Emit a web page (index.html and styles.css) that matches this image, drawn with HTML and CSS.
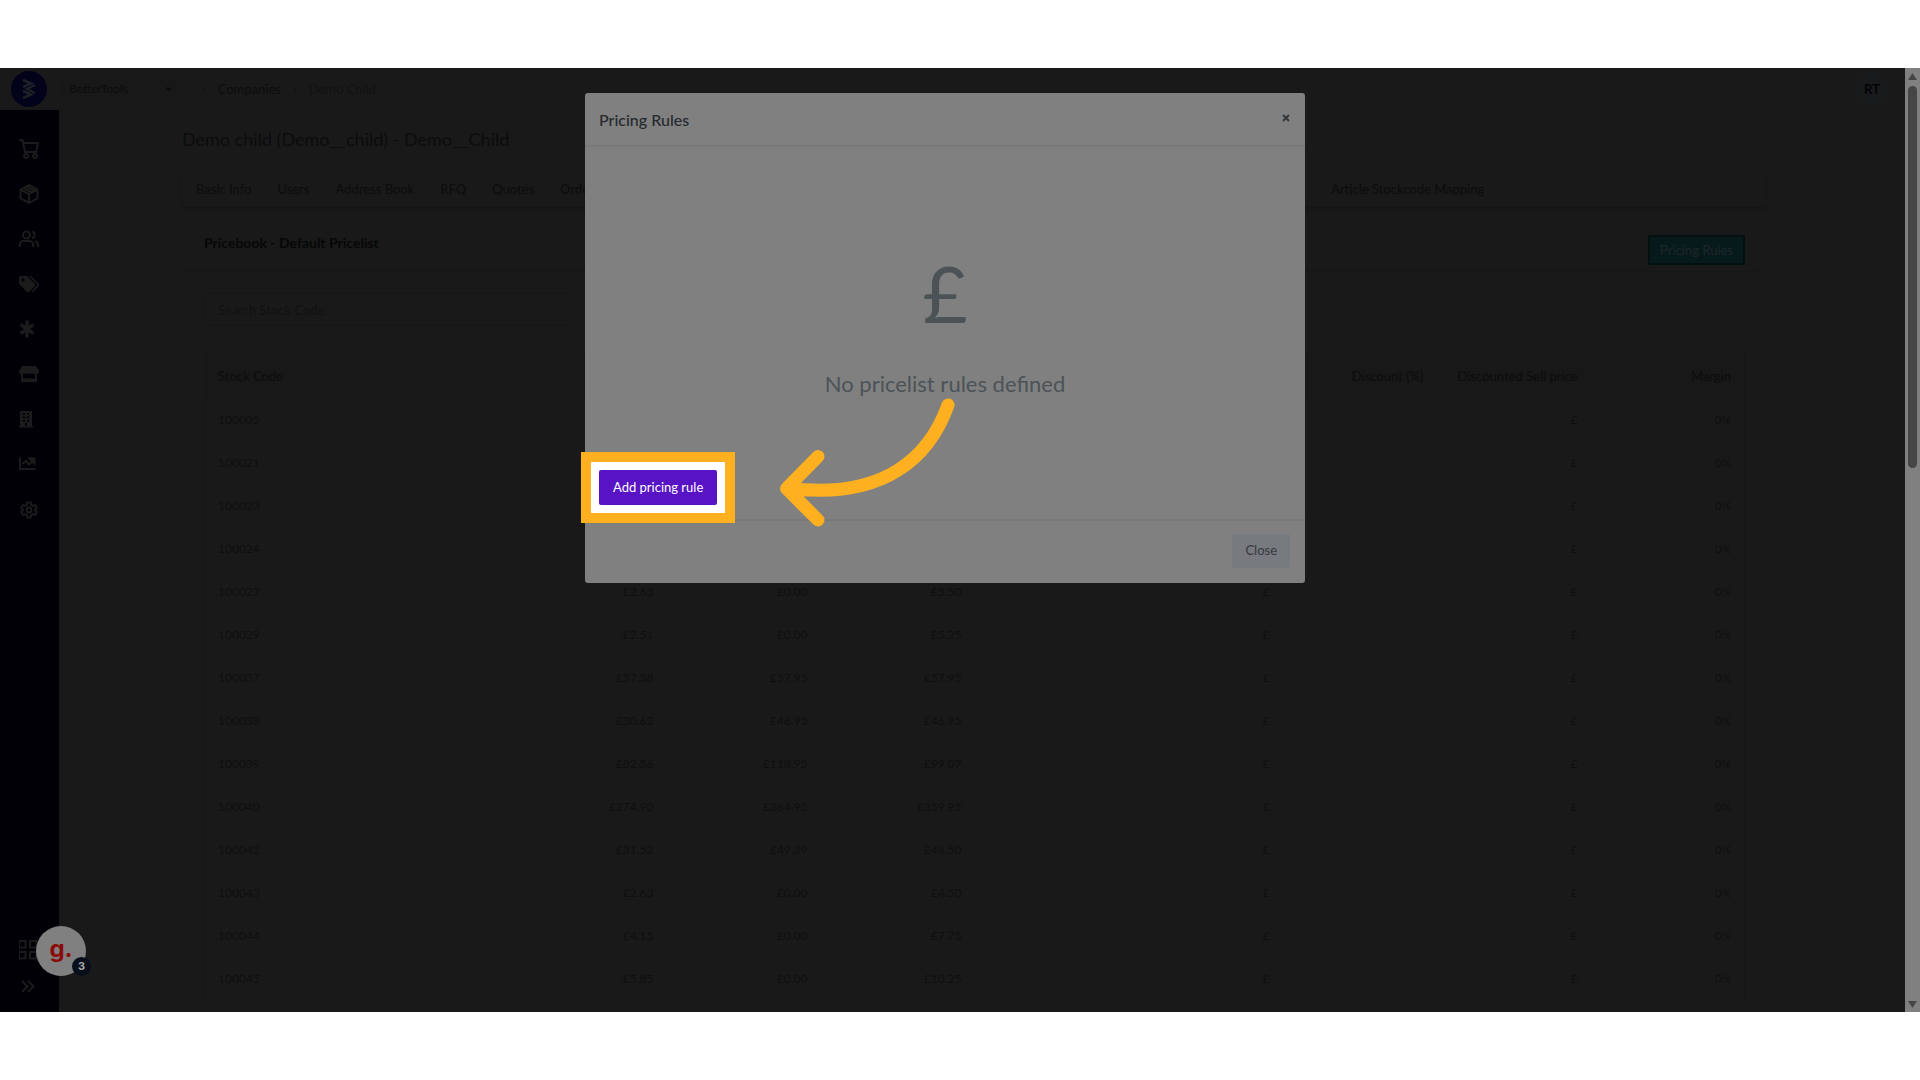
FILE: index.html
```html
<!DOCTYPE html>
<html lang="en">
<head>
  <meta charset="UTF-8">
  <meta name="viewport" content="width=device-width, initial-scale=1.0">
  <title>Pricing Rules</title>
  <link rel="stylesheet" href="styles.css">
</head>
<body>
<div class="stage">

  <header class="topbar">
    <a class="logo" href="#" aria-label="Home">
      <svg width="36" height="36" viewBox="0 0 36 36"><circle cx="18" cy="18" r="18" fill="#02031a"/><path d="M12 9l8 3.500-8 3.500M24 14l-8 4 8 4M12 20l8 3.500-8 3.500" fill="none" stroke="#1d2126" stroke-width="2.500"/></svg>
    </a>
    <select class="store-select" aria-label="Store"><option>BetterTools</option></select>
    <nav class="breadcrumb">
      <span class="sep">›</span><a href="#">Companies</a><span class="sep">›</span><span class="current">Demo Child</span>
    </nav>
    <button class="avatar">RT</button>
  </header>

  <div class="layout">
    <nav class="sidebar">
      <a href="#" aria-label="Orders"><svg viewBox="0 0 20 20" class="line"><path d="M0 1h3.500l2.500 12h11l2-9H4.500"/><circle cx="7" cy="17" r="2"/><circle cx="16" cy="17" r="2"/></svg></a>
      <a href="#" aria-label="Products"><svg viewBox="0 0 20 20" class="line"><path d="M10 1l8.500 4.500v9L10 19l-8.500-4.500v-9zM1.500 5.500L10 10l8.500-4.500M10 10v9M4.500 4l8.500 4.500M7.500 2.500L16 7"/></svg></a>
      <a href="#" aria-label="Users"><svg viewBox="0 0 20 20" class="line"><circle cx="7.500" cy="6" r="3.500"/><path d="M1 18v-2.500a3.500 3.500 0 0 1 3.500-3.500h6a3.500 3.500 0 0 1 3.500 3.500V18M13 2.600a3.500 3.500 0 0 1 0 6.800M16 12.200a3.500 3.500 0 0 1 3 3.300V18"/></svg></a>
      <a href="#" aria-label="Prices"><svg viewBox="0 0 20 20" class="solid"><path fill-rule="evenodd" d="M0 3.500A1.500 1.500 0 0 1 1.500 2h6.500l8 8q1 1 0 2l-6 6q-1 1-2 0L0 10zM4 4.500a1.500 1.500 0 1 0 0 3 1.500 1.500 0 0 0 0-3z"/><path d="M10 2h2l8 8q.8 1 0 2l-6.500 6.500-1.200-1L18.500 11z"/></svg></a>
      <a href="#" aria-label="Attributes"><svg viewBox="0 0 20 20" class="line"><path stroke-width="3.500" d="M8 1.500v17M1.500 5.500l13 9M14.500 5.500l-13 9"/></svg></a>
      <a href="#" aria-label="Shops"><svg viewBox="0 0 20 20" class="solid"><path fill-rule="evenodd" d="M3 2h14l3 5q0 3-2 3v8H2v-8Q0 10 0 7zM4 10v4.500h12V10q-2 0-2-.8-2 1.600-4 0-2 1.600-4 0 0 .8-2 .8z"/></svg></a>
      <a href="#" aria-label="Companies"><svg viewBox="0 0 20 20" class="solid"><path fill-rule="evenodd" d="M1 2h12v15h1v1.500H0V17h1zM4 4v2h2V4zm4 0v2h2V4zM4 7.500v2h2v-2zm4 0v2h2v-2zM4 11v2h2v-2zm4 0v2h2v-2zM6 14v3h2v-3z"/></svg></a>
      <a href="#" aria-label="Reports"><svg viewBox="0 0 20 20" class="line"><path d="M1 3.500V15h15.500M3.500 10l3.500-3 3 3.500 4-4"/><path class="fill" d="M10.500 4.500h5v5z"/></svg></a>
      <a href="#" aria-label="Settings"><svg viewBox="0 0 20 20" class="line"><circle cx="10" cy="11" r="2.500"/><path d="M8.300 3.500h3.400l.5 2.300 1.700 1 2.200-.8 1.700 3-1.700 1.500v1l1.700 1.500-1.700 3-2.200-.8-1.700 1-.5 2.300H8.300l-.5-2.300-1.700-1-2.200.8-1.700-3 1.700-1.500v-1L2.200 9l1.700-3 2.200.8 1.700-1z"/></svg></a>
      <div class="sidebar-end">
        <a href="#" aria-label="Apps"><svg viewBox="0 0 20 20" class="line"><path d="M0 1h6.500v6.500H0zM11 1h6.500v6.500H11zM0 12h6.500v6.500H0zM11 12h6.500v6.500H11z"/></svg></a>
        <a href="#" aria-label="Expand"><svg viewBox="0 0 20 20" class="line"><path d="M3 5l5.500 5.500L3 16M9 5l5.500 5.500L9 16"/></svg></a>
      </div>
    </nav>

    <main class="content">
      <h1>Demo child (Demo__child) - Demo__Child</h1>

      <nav class="tabs">
        <a href="#">Basic Info</a>
        <a href="#">Users</a>
        <a href="#">Address Book</a>
        <a href="#">RFQ</a>
        <a href="#">Quotes</a>
        <a href="#" class="orders">Orders</a>
        <a href="#">Article Stockcode Mapping</a>
      </nav>

      <section class="card">
        <div class="card-header">
          <h2>Pricebook - Default Pricelist</h2>
          <button class="btn-rules">Pricing Rules</button>
        </div>
        <div class="card-body">
          <input class="search" type="text" placeholder="Search Stock Code" aria-label="Search Stock Code">
          <table>
            <thead>
              <tr><th class="code">Stock Code</th><th></th><th></th><th></th><th class="wide"></th><th>Discount (%)</th><th>Discounted Sell price</th><th>Margin</th></tr>
            </thead>
            <tbody>
              <tr><td>100005</td><td></td><td></td><td></td><td></td><td></td><td>£</td><td>0%</td></tr>
              <tr><td>100021</td><td></td><td></td><td></td><td></td><td></td><td>£</td><td>0%</td></tr>
              <tr><td>100023</td><td></td><td></td><td></td><td></td><td></td><td>£</td><td>0%</td></tr>
              <tr><td>100024</td><td></td><td></td><td></td><td></td><td></td><td>£</td><td>0%</td></tr>
              <tr><td>100027</td><td>£2.63</td><td>£0.00</td><td>£5.50</td><td>£</td><td></td><td>£</td><td>0%</td></tr>
              <tr><td>100029</td><td>£2.51</td><td>£0.00</td><td>£5.25</td><td>£</td><td></td><td>£</td><td>0%</td></tr>
              <tr><td>100037</td><td>£37.38</td><td>£57.95</td><td>£57.95</td><td>£</td><td></td><td>£</td><td>0%</td></tr>
              <tr><td>100038</td><td>£30.62</td><td>£46.95</td><td>£46.95</td><td>£</td><td></td><td>£</td><td>0%</td></tr>
              <tr><td>100039</td><td>£82.56</td><td>£118.95</td><td>£99.07</td><td>£</td><td></td><td>£</td><td>0%</td></tr>
              <tr><td>100040</td><td>£274.90</td><td>£364.95</td><td>£359.95</td><td>£</td><td></td><td>£</td><td>0%</td></tr>
              <tr><td>100042</td><td>£31.52</td><td>£49.39</td><td>£48.50</td><td>£</td><td></td><td>£</td><td>0%</td></tr>
              <tr><td>100043</td><td>£2.63</td><td>£0.00</td><td>£4.50</td><td>£</td><td></td><td>£</td><td>0%</td></tr>
              <tr><td>100044</td><td>£4.15</td><td>£0.00</td><td>£7.75</td><td>£</td><td></td><td>£</td><td>0%</td></tr>
              <tr><td>100045</td><td>£5.85</td><td>£0.00</td><td>£10.25</td><td>£</td><td></td><td>£</td><td>0%</td></tr>
            </tbody>
          </table>
        </div>
      </section>
    </main>
  </div>

  <!-- scrollbar -->
  <div class="scrollbar">
    <svg width="9" height="7" viewBox="0 0 9 7"><path d="M4.500 0L9 7H0z"/></svg>
    <div class="track"><div class="thumb"></div></div>
    <svg width="9" height="7" viewBox="0 0 9 7"><path d="M4.500 7L9 0H0z"/></svg>
  </div>

  <!-- guide widget -->
  <button class="guide">g.<span class="guide-count">3</span></button>

  <!-- modal -->
  <div class="overlay">
    <div class="modal" role="dialog" aria-labelledby="modal-title">
      <div class="modal-header">
        <h3 id="modal-title">Pricing Rules</h3>
        <button class="modal-x" aria-label="Dismiss">
          <svg width="8" height="8" viewBox="0 0 8 8"><path d="M1 1l6 6M7 1L1 7" stroke="#35383b" stroke-width="2"/></svg>
        </button>
      </div>
      <div class="modal-body">
        <div class="pound">£</div>
        <p class="empty">No pricelist rules defined</p>
        <div class="highlight"><button class="btn-add">Add pricing rule</button></div>
        <svg class="arrow" width="190" height="150" viewBox="770 390 190 150">
          <path d="M948 404C930 455 885 500 787 487M818 455.500L786.500 487.500 818 519"/>
        </svg>
      </div>
      <div class="modal-footer"><button class="btn-close">Close</button></div>
    </div>
  </div>

</div>
</body>
</html>
```
FILE: styles.css
```css
* { box-sizing: border-box; }
body {
  margin: 0;
  padding: 68px 0;
  height: 100vh;
  background: #fff;
  font-family: Lato, "Open Sans", sans-serif;
  font-size: 13px;
}
a { color: inherit; text-decoration: none; }
button, input, select { font: inherit; color: inherit; }
button { border: none; cursor: pointer; }
h1, h2, h3, p { margin: 0; font-weight: normal; }

.stage {
  position: relative;
  height: 100%;
  overflow: hidden;
  display: flex;
  flex-direction: column;
  background: #191919;
  color: #0b0c0d;
}

/* top bar */
.topbar {
  display: flex;
  align-items: center;
  height: 42px;
  padding: 0 32px 0 11px;
  border-bottom: 1px solid #171717;
}
.logo { display: flex; }
.store-select {
  width: 126px;
  height: 24px;
  margin-left: 12px;
  padding: 0 10px;
  border: none;
  border-radius: 3px;
  appearance: none;
  font-size: 12px;
  background: #181818 url("data:image/svg+xml,%3Csvg xmlns='http://www.w3.org/2000/svg' width='6' height='4'%3E%3Cpath d='M.5.5L3 3 5.500.5' fill='none' stroke='%23090909' stroke-width='1.500'/%3E%3C/svg%3E") no-repeat right 13px center;
}
.breadcrumb { display: flex; gap: 12px; margin-left: 17px; }
.breadcrumb .sep, .breadcrumb .current { color: #121212; }
.avatar {
  width: 32px;
  height: 32px;
  margin-left: auto;
  padding: 0;
  border-radius: 50%;
  background: #171b1c;
  color: #030405;
  font-weight: bold;
}

/* sidebar */
.layout { flex: 1; min-height: 0; display: flex; }
.sidebar {
  width: 59px;
  display: flex;
  flex-direction: column;
  gap: 25px;
  padding: 29px 0 16px 19px;
  background: #000006;
}
.sidebar svg { display: block; width: 20px; height: 20px; }
.line { fill: none; stroke: #1b1b1c; stroke-width: 2; }
.solid, .fill { fill: #1b1b1c; }
.sidebar-end { margin-top: auto; display: flex; flex-direction: column; gap: 16px; }

/* page content */
.content { flex: 1; padding: 15px 154px 0 123px; }
h1 { font-size: 18px; line-height: 28px; }
.tabs {
  display: flex;
  align-items: center;
  gap: 26px;
  height: 37px;
  margin-top: 17px;
  padding: 0 13px;
  border: 1px solid #181818;
  box-shadow: 0 2px 2px #161616;
}
.orders { width: 745px; }
.card { margin-top: 11px; border: 1px solid #171717; }
.card-header {
  display: flex;
  justify-content: space-between;
  align-items: flex-start;
  height: 53px;
  padding: 16px 20px 0 21px;
  border-bottom: 1px solid #161616;
}
h2 { font-size: 14px; line-height: 16px; color: #060708; font-weight: bold; }
.btn-rules {
  height: 30px;
  padding: 0 10px;
  border: 2px solid #040f10;
  border-radius: 2px;
  background: #071a1b;
  color: #1e2728;
}
.card-body { padding: 21px 20px 0 21px; }
.search {
  display: block;
  width: 24%;
  height: 33px;
  padding: 0 13px;
  border: 1px solid #161616;
  border-radius: 2px;
  background: transparent;
}
.search::placeholder { color: #111; }

table {
  width: 100%;
  margin-top: 28px;
  border: 1px solid #161616;
  border-collapse: collapse;
  table-layout: fixed;
}
th, td {
  height: 43px;
  padding: 0 13px;
  border-bottom: 1px solid #171717;
  text-align: right;
  font-weight: normal;
  white-space: nowrap;
}
td { color: #0f0f0f; font-size: 12px; }
th { background: #181818; width: 10%; }
.code, .wide { width: 20%; }
th:first-child, td:first-child { text-align: left; }

/* scrollbar */
.scrollbar {
  position: absolute;
  top: 0;
  right: 0;
  bottom: 0;
  width: 15px;
  display: flex;
  flex-direction: column;
  align-items: center;
  padding: 5px 0 4px;
  background: #808080;
}
.scrollbar svg { fill: #464646; }
.track { flex: 1; padding: 6px 0; }
.thumb { width: 9px; height: 42%; border-radius: 5px; background: #464646; }

/* guide widget */
.guide {
  position: absolute;
  left: 36px;
  bottom: 36px;
  width: 50px;
  height: 50px;
  padding: 0 0 6px;
  border-radius: 50%;
  background: #808080;
  color: #8a0a0a;
  font-family: Inter, sans-serif;
  font-size: 24px;
  font-weight: bold;
}
.guide-count {
  position: absolute;
  right: -5px;
  bottom: 0;
  width: 19px;
  height: 19px;
  border-radius: 50%;
  background: #080f1a;
  color: #a5a8aa;
  font-size: 11px;
  line-height: 19px;
}

/* modal */
.overlay { position: absolute; top: 25px; left: 0; right: 30px; }
.modal {
  width: 720px;
  margin: 0 auto;
  border-radius: 3px;
  background: #808080;
  color: #25292d;
}
.modal-header {
  display: flex;
  justify-content: space-between;
  height: 54px;
  padding: 17px 15px 17px 14px;
  border-bottom: 2px solid #797979;
}
h3 { font-size: 16px; line-height: 20px; font-weight: 500; }
.modal-x { display: flex; width: 8px; height: 18px; padding: 4px 0; background: none; }
.modal-body {
  position: relative;
  padding: 106px 14px 14px;
  border-bottom: 2px solid #797979;
  text-align: center;
  color: #4c5357;
}
.pound { font-size: 78px; line-height: 80px; }
.empty { margin-top: 36px; font-size: 22px; line-height: 30px; }
.highlight {
  position: relative;
  width: max-content;
  margin: 53px 0 -18px -18px;
  padding: 8px;
  border: 10px solid #ffb020;
  background: #fff;
}
.btn-add {
  display: block;
  height: 35px;
  padding: 0 14px 2px;
  border-radius: 2px;
  background: #5713c4;
  color: #fff;
}
.arrow { position: absolute; right: 345px; top: 244px; }
.arrow path {
  fill: none;
  stroke: #ffb020;
  stroke-width: 13;
  stroke-linecap: round;
  stroke-linejoin: round;
}
.modal-footer { display: flex; justify-content: flex-end; padding: 13px 15px 15px; }
.btn-close {
  height: 34px;
  padding: 0 13px 2px;
  border-radius: 2px;
  background: #777a7e;
  color: #36393d;
}
```
